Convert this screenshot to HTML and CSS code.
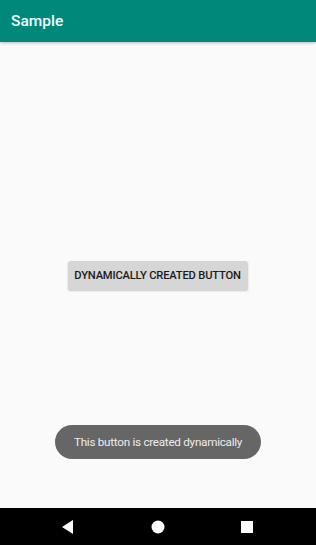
FILE: index.html
```html
<!DOCTYPE html>
<html>
<head>
<meta charset="utf-8">
<link rel="stylesheet" href="styles.css">
</head>
<body>
<div class="screen">
  <header class="appbar"><span class="title">Sample</span></header>
  <main class="content">
    <div class="center">
      <button class="btn">DYNAMICALLY CREATED BUTTON</button>
    </div>
    <div class="toast-row">
      <div class="toast">This button is created dynamically</div>
    </div>
  </main>
  <nav class="navbar">
    <svg class="nav-icon" width="12" height="14" viewBox="0 0 12 14"><polygon points="11,0 11,14 0,7" fill="#fff"/></svg>
    <svg class="nav-icon" width="14" height="14" viewBox="0 0 14 14"><circle cx="7" cy="7" r="6.5" fill="#fff"/></svg>
    <svg class="nav-icon" width="12" height="12" viewBox="0 0 12 12"><rect x="0" y="0" width="12" height="12" fill="#fff"/></svg>
  </nav>
</div>
</body>
</html>
```
FILE: styles.css
```css
* { box-sizing: border-box; }
html, body { margin: 0; padding: 0; }
body { font-family: Roboto, "Noto Sans", sans-serif; background: #fafafa; }
.screen { width: 316px; height: 545px; display: flex; flex-direction: column; }
.appbar {
  height: 42px; background: #00897b; display: flex; align-items: center;
  padding-left: 11px; box-shadow: 0 1px 3px rgba(0,0,0,0.25); position: relative; z-index: 1;
}
.title { color: #f4fbfa; font-size: 15.5px; font-weight: 500; }
.content { flex: 1; display: flex; flex-direction: column; background: #fafafa; }
.center { height: 248px; display: flex; align-items: flex-end; justify-content: center; }
.btn {
  width: 179px; height: 29px; border: none; border-radius: 2px;
  background: #d6d6d6; color: #1a1a1a; font-family: Roboto, sans-serif; font-size: 11.2px; font-weight: 500;
  letter-spacing: -0.2px;
  padding: 0; box-shadow: 0 1px 2px rgba(0,0,0,0.2); transform: translateX(-0.5px);
}
.toast-row { margin-top: 135px; display: flex; justify-content: center; }
.toast {
  width: 206px; height: 34px; border-radius: 17px; background: #666666; color: #ededed;
  font-size: 11.7px; letter-spacing: -0.27px; display: flex; align-items: center; justify-content: center;
}
.navbar {
  height: 37px; background: #000; display: flex; align-items: center; justify-content: space-between;
  padding: 0 63px 0 62px;
}
.nav-icon { display: block; }
```
